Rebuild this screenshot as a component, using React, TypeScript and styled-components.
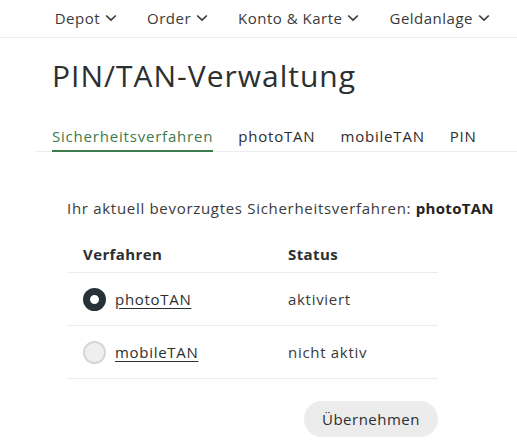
import React from "react";
import styled, { createGlobalStyle } from "styled-components";

const Global = createGlobalStyle`
  html, body { margin: 0; padding: 0; background: #fff; }
  body { font-family: "Open Sans", "Lato", sans-serif; color: #2d2d2d; }
  * { box-sizing: border-box; }
`;

const Page = styled.div`
  width: 517px;
  height: 447px;
  overflow: hidden;
`;

const Nav = styled.nav`
  height: 38px;
  display: flex;
  justify-content: flex-end;
  align-items: center;
  gap: 30px;
  padding: 0 27px 1px 0;
  border-bottom: 1px solid #ececec;
`;

const NavItem = styled.div`
  display: flex;
  align-items: center;
  gap: 5px;
  font-size: 15px;
  letter-spacing: 0.5px;
  color: #3a3a3a;
`;

const Main = styled.main``;

const Title = styled.h1`
  margin: 19px 0 0 52px;
  font-size: 30px;
  font-weight: 400;
  line-height: 38px;
  letter-spacing: 1px;
  color: #2b2f30;
`;

const Tabs = styled.div`
  margin: 31px 0 0 35px;
  display: flex;
  gap: 25px;
  padding-left: 17px;
  border-bottom: 1px solid #ececec;
`;

const Tab = styled.div<{ $active?: boolean }>`
  font-size: 15px;
  line-height: 20px;
  letter-spacing: 0.8px;
  padding-bottom: 4px;
  color: ${(p) => (p.$active ? "#3d7b4c" : "#2d2d2d")};
  border-bottom: 2px solid ${(p) => (p.$active ? "#3d7b4c" : "transparent")};
  margin-bottom: -1px;
`;

const Section = styled.section`
  padding: 46px 0 0 67px;
`;

const Intro = styled.p`
  margin: 0;
  font-size: 15px;
  line-height: 20px;
  letter-spacing: 0.7px;
  color: #3a3a3a;
  b { font-weight: 700; color: #222; letter-spacing: 0.3px; }
`;

const Table = styled.div`
  margin-top: 17px;
  width: 371px;
  display: grid;
  grid-template-columns: 221px 1fr;
`;

const HeadCell = styled.div<{ $first?: boolean }>`
  height: 38px;
  display: flex;
  align-items: center;
  font-size: 15px;
  font-weight: 700;
  letter-spacing: 0.4px;
  color: #2b2f30;
  border-bottom: 1px solid #ececec;
  padding-left: ${(p) => (p.$first ? "16px" : "0")};
`;

const Cell = styled.div<{ $first?: boolean }>`
  height: 53px;
  display: flex;
  align-items: center;
  gap: 9px;
  font-size: 15px;
  letter-spacing: 0.7px;
  color: #3a3a3a;
  border-bottom: 1px solid #ececec;
  padding-left: ${(p) => (p.$first ? "16px" : "0")};
`;

const Radio = styled.span<{ $checked?: boolean }>`
  width: 23px;
  height: 23px;
  border-radius: 50%;
  flex: none;
  background: ${(p) => (p.$checked ? "#fff" : "#efefef")};
  border: ${(p) => (p.$checked ? "7px solid #263238" : "2px solid #d6d6d6")};
`;

const Link = styled.a`
  color: #2b2f30;
  text-decoration: underline;
  text-underline-offset: 3px;
`;

const Actions = styled.div`
  width: 371px;
  display: flex;
  justify-content: flex-end;
  margin-top: 22px;
`;

const Button = styled.button`
  height: 36px;
  width: 134px;
  border-radius: 18px;
  border: none;
  background: #ececec;
  font-family: inherit;
  font-size: 15px;
  font-weight: 500;
  letter-spacing: 0.5px;
  color: #2b2f30;
`;

const Chevron = () => (
  <svg width="12" height="8" viewBox="0 0 12 8" fill="none">
    <path d="M1.2 1.5l4.8 4.6 4.8-4.6" stroke="#3a3a3a" strokeWidth="1.7" />
  </svg>
);

export default function App() {
  const nav = ["Depot", "Order", "Konto & Karte", "Geldanlage"];
  return (
    <Page>
      <Global />
      <Nav>
        {nav.map((n) => (
          <NavItem key={n}>
            {n}
            <Chevron />
          </NavItem>
        ))}
      </Nav>
      <Main>
        <Title>PIN/TAN-Verwaltung</Title>
        <Tabs>
          <Tab $active>Sicherheitsverfahren</Tab>
          <Tab>photoTAN</Tab>
          <Tab>mobileTAN</Tab>
          <Tab>PIN</Tab>
        </Tabs>
        <Section>
          <Intro>
            Ihr aktuell bevorzugtes Sicherheitsverfahren: <b>photoTAN</b>
          </Intro>
          <Table>
            <HeadCell $first>Verfahren</HeadCell>
            <HeadCell>Status</HeadCell>
            <Cell $first>
              <Radio $checked />
              <Link>photoTAN</Link>
            </Cell>
            <Cell>aktiviert</Cell>
            <Cell $first>
              <Radio />
              <Link>mobileTAN</Link>
            </Cell>
            <Cell>nicht aktiv</Cell>
          </Table>
          <Actions>
            <Button>Übernehmen</Button>
          </Actions>
        </Section>
      </Main>
    </Page>
  );
}
